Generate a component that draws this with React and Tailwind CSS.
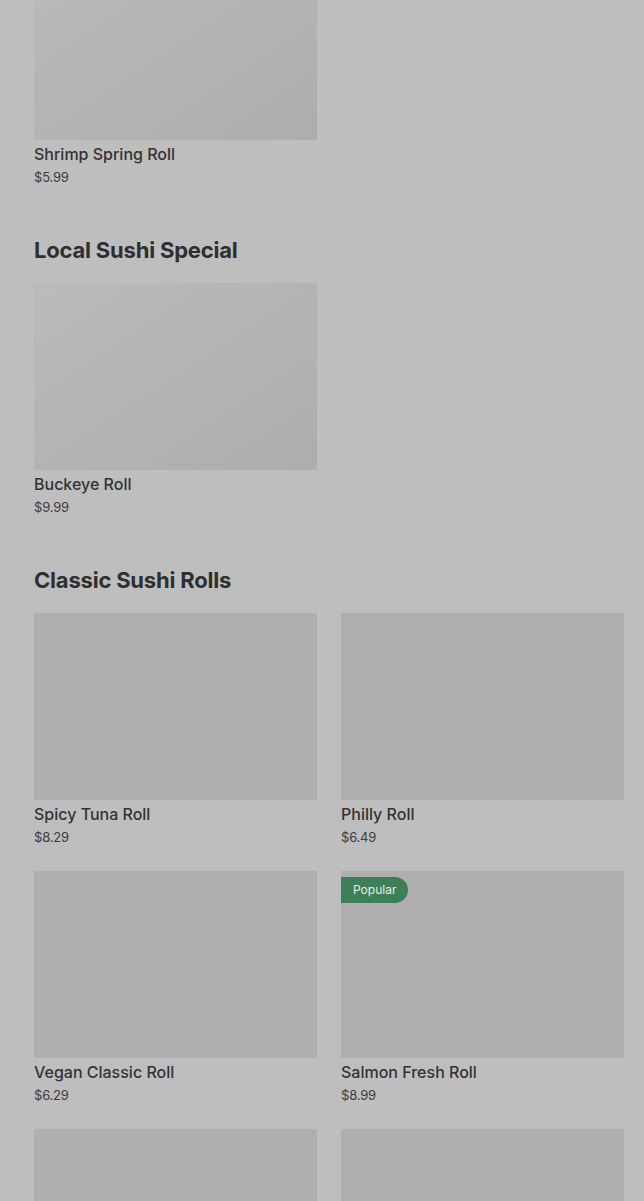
const sections = [
  {
    title: null,
    items: [{ name: "Shrimp Spring Roll", price: "$5.99", fancy: true }],
  },
  {
    title: "Local Sushi Special",
    items: [{ name: "Buckeye Roll", price: "$9.99", fancy: true }],
  },
  {
    title: "Classic Sushi Rolls",
    items: [
      { name: "Spicy Tuna Roll", price: "$8.29" },
      { name: "Philly Roll", price: "$6.49" },
      { name: "Vegan Classic Roll", price: "$6.29" },
      { name: "Salmon Fresh Roll", price: "$8.99", popular: true },
      { name: "", price: "" },
      { name: "", price: "" },
    ],
  },
];

function Item({ item }) {
  return (
    <div className="flex flex-col">
      <div
        className={
          item.fancy
            ? "relative h-[187px] bg-gradient-to-br from-[#bbbbbb] to-[#adadad]"
            : "relative h-[187px] bg-[#afafaf]"
        }
      >
        {item.popular && (
          <span className="absolute left-0 top-[6px] h-[26px] pl-3 pr-3 flex items-center rounded-r-full bg-[#3d8058] text-[12px] text-[#e6ede9]">
            Popular
          </span>
        )}
      </div>
      {item.name && (
        <>
          <div className="mt-[3px] text-[16px] leading-[22px] font-medium text-[#333333]">{item.name}</div>
          <div className="mt-[3px] text-[13px] leading-[18px] text-[#3c3c3c] tracking-[-0.2px]">{item.price}</div>
        </>
      )}
    </div>
  );
}

export default function App() {
  return (
    <div
      className="h-screen bg-[#bebebe] pl-[34px] pr-[20px] overflow-hidden"
      style={{ fontFamily: "Inter, 'Noto Sans', sans-serif" }}
    >
      <div className="-mt-[47px] flex flex-col gap-[50px] pb-10">
        {sections.map((s, i) => (
          <section key={i} className="flex flex-col">
            {s.title && (
              <h2 className="mb-[19px] text-[22px] leading-[28px] font-bold tracking-[-0.2px] text-[#2f2f2f]">
                {s.title}
              </h2>
            )}
            <div className="grid grid-cols-2 gap-x-6 gap-y-[25px]">
              {s.items.map((it, j) => (
                <Item key={j} item={it} />
              ))}
            </div>
          </section>
        ))}
      </div>
    </div>
  );
}
